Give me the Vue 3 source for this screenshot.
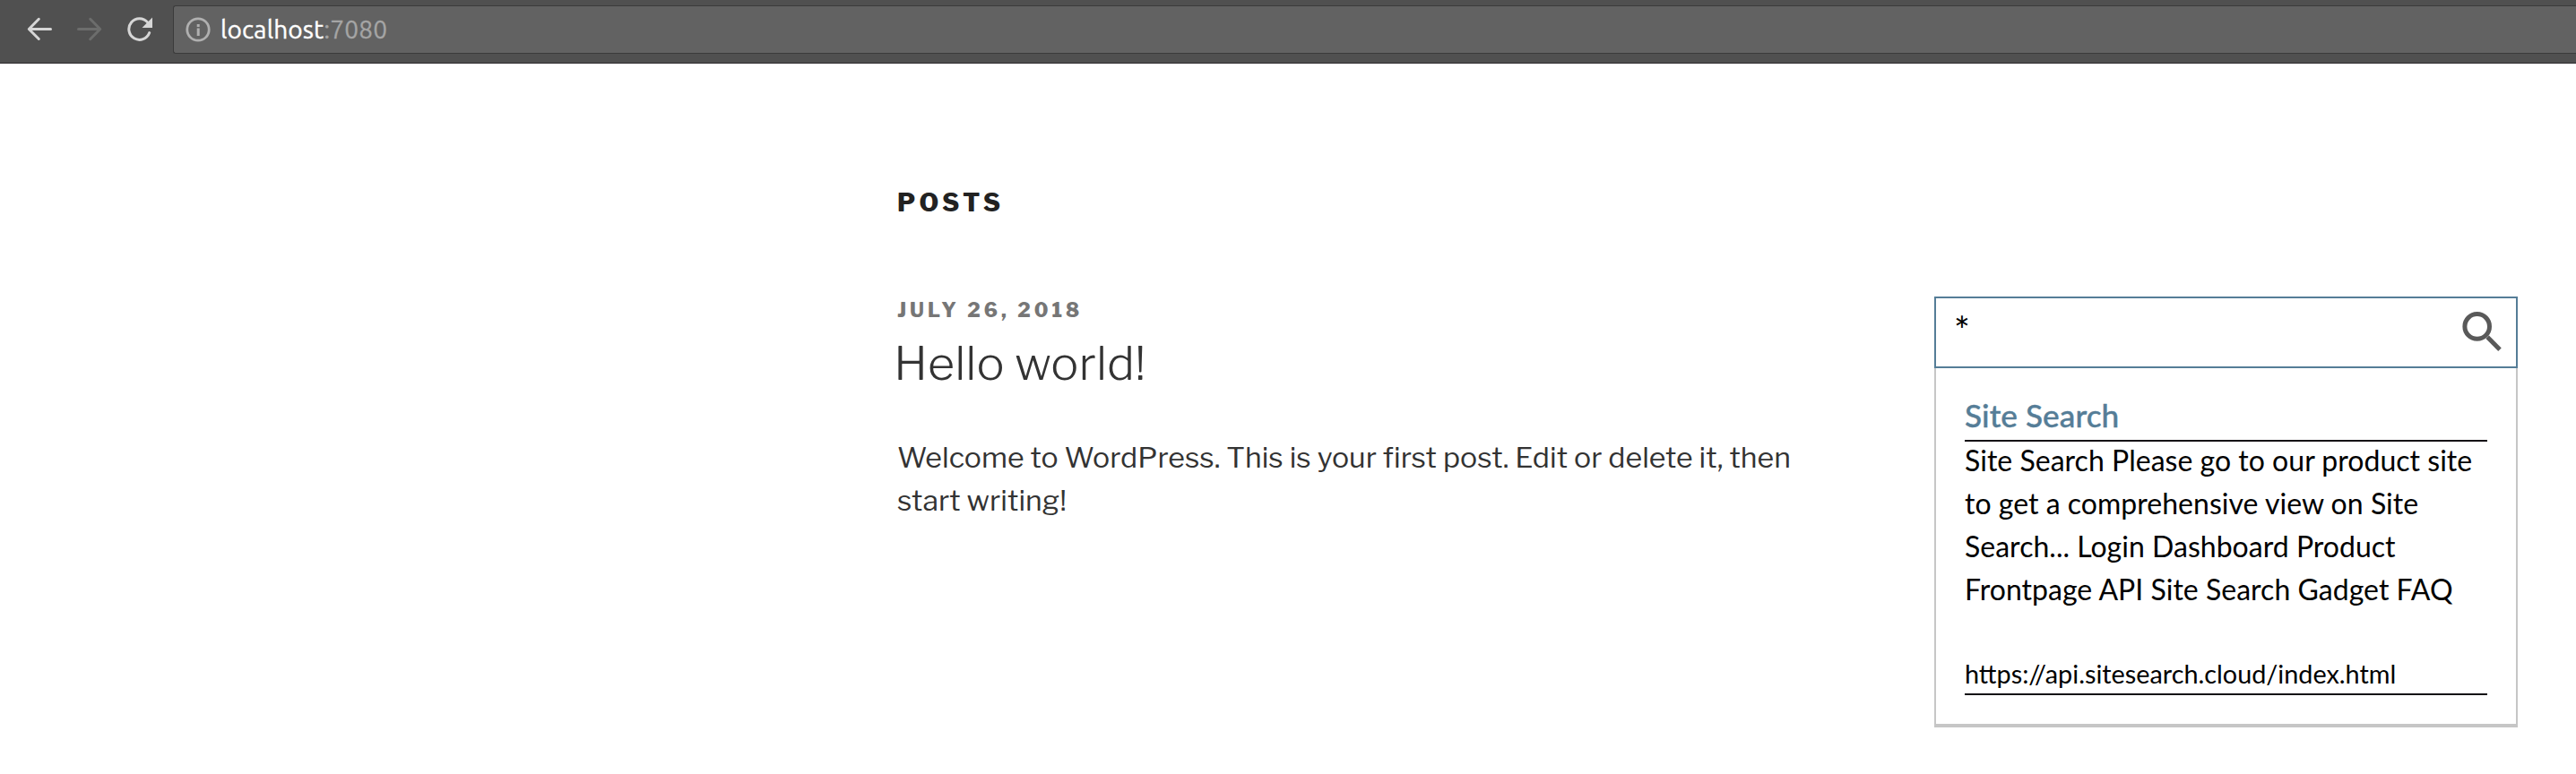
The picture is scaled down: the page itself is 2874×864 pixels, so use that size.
<script setup>
import { ref } from 'vue'

const query = ref('*')
const post = {
  date: 'July 26, 2018',
  title: 'Hello world!',
  body: 'Welcome to WordPress. This is your first post. Edit or delete it, then start writing!'
}
const results = [
  {
    title: 'Site Search',
    text: 'Site Search Please go to our product site to get a comprehensive view on Site Search... Login Dashboard Product Frontpage API Site Search Gadget FAQ',
    url: 'https://api.sitesearch.cloud/index.html'
  }
]
</script>

<template>
  <div class="window">
    <header class="toolbar">
      <nav class="nav">
        <svg class="icon back" viewBox="0 0 28 28">
          <path d="M26.5 14.5H2.8M13.3 3.3L2.3 14.5l11 11" />
        </svg>
        <svg class="icon forward" viewBox="0 0 28 28">
          <path d="M1.5 14.5h23.7M14.7 3.3l11 11.2-11 11.2" />
        </svg>
        <svg class="icon reload" viewBox="0 0 28 28">
          <path d="M24.7 18.6A11.8 11.8 0 1 1 22.6 6.9" />
          <path class="head" d="M28 1.5V13H16.5z" />
        </svg>
      </nav>
      <div class="address">
        <svg class="info" viewBox="0 0 28 28">
          <circle cx="14" cy="14" r="12.2" />
          <path d="M12.7 8h3v3h-3zM12.7 12.5h3V21h-3z" />
        </svg>
        <span class="host">localhost</span><span class="port">:7080</span>
      </div>
    </header>

    <div class="page">
      <main class="content">
        <h2 class="page-title">Posts</h2>
        <article>
          <div class="date">{{ post.date }}</div>
          <h3 class="post-title">{{ post.title }}</h3>
          <p class="post-body">{{ post.body }}</p>
        </article>
      </main>

      <aside class="search">
        <div class="search-box">
          <span class="query">{{ query }}</span>
          <svg class="glass" viewBox="0 0 44 44">
            <circle cx="16.7" cy="16.4" r="13.8" />
            <path d="M28.2 28.2L42 42.2" />
          </svg>
        </div>
        <div class="results">
          <section v-for="r in results" :key="r.url" class="result">
            <h4 class="result-title">{{ r.title }}</h4>
            <p class="result-text">{{ r.text }}</p>
            <div class="result-url">{{ r.url }}</div>
          </section>
        </div>
      </aside>
    </div>
  </div>
</template>

<style>
body {
  background: #fff;
}
</style>

<style scoped>
* {
  box-sizing: border-box;
}
.window {
  height: 864px;
  overflow: hidden;
  background: #fff;
}
.toolbar {
  display: flex;
  height: 71px;
  padding-top: 6px;
  background: #505050;
  border-bottom: 1px solid #2b292b;
}
.nav {
  display: flex;
  gap: 28px;
  padding: 12px 0 0 30px;
  width: 193px;
  flex: none;
}
.icon {
  width: 28px;
  height: 28px;
  fill: none;
  stroke: #d6d6d6;
  stroke-width: 3;
  stroke-linecap: round;
  stroke-linejoin: round;
}
.forward {
  stroke: #6c6d6c;
}
.reload .head {
  fill: #d6d6d6;
  stroke: none;
}
.address {
  display: flex;
  align-items: center;
  flex: 1;
  height: 54px;
  padding-left: 13px;
  background: #626262;
  border: 1px solid #3b3b3b;
  border-right: 0;
  border-radius: 3px 0 0 3px;
  font: 28px/52px Ubuntu, "Open Sans", sans-serif;
  letter-spacing: 0.15px;
}
.info {
  width: 28px;
  height: 28px;
  margin-right: 11px;
  fill: #b0b0b0;
}
.info circle {
  fill: none;
  stroke: #b0b0b0;
  stroke-width: 2.8;
}
.host {
  color: #fff;
  -webkit-text-stroke: 0.4px #fff;
}
.port {
  color: #a5a5a5;
  -webkit-text-stroke: 0.3px #a5a5a5;
}
.page {
  display: flex;
  padding-left: 1000px;
}
.content {
  width: 1020px;
  padding-top: 135px;
  font-family: "Libre Franklin", Inter, sans-serif;
}
.page-title {
  margin: 0;
  padding-left: 1px;
  font-size: 28px;
  font-weight: 800;
  line-height: 40px;
  letter-spacing: 4.3px;
  text-transform: uppercase;
  color: #222;
}
.date {
  margin-top: 84px;
  padding-left: 1px;
  font-size: 22px;
  font-weight: 800;
  line-height: 32px;
  letter-spacing: 0.1818em;
  text-transform: uppercase;
  color: #767676;
}
.post-title {
  margin: 14px 0 0 -3px;
  font-size: 52px;
  font-weight: 300;
  line-height: 60px;
  letter-spacing: 0.05px;
  color: #333;
}
.post-body {
  margin: 51px 0 0;
  padding-left: 1px;
  font-size: 32px;
  line-height: 48px;
  letter-spacing: 0.03px;
  color: #333;
}
.search {
  width: 651px;
  margin: 260px 0 0 138px;
  font-family: Lato, sans-serif;
}
.search-box {
  display: flex;
  justify-content: space-between;
  height: 80px;
  padding: 15px 16px 0 20px;
  border: 2px solid #557d97;
}
.query {
  font-size: 42px;
  line-height: 40px;
  color: #000;
}
.glass {
  width: 44px;
  height: 44px;
  fill: none;
  stroke: #595959;
  stroke-width: 5;
}
.results {
  height: 401px;
  padding: 30px 32px 0;
  border: 2px solid #c6c6c6;
  border-top: 0;
  border-bottom-width: 4px;
}
.result-title {
  margin: 0;
  height: 52px;
  border-bottom: 2px solid #141115;
  font-size: 35.2px;
  font-weight: 500;
  line-height: 44px;
  letter-spacing: 0.05px;
  color: #557d97;
  -webkit-text-stroke: 0.4px #557d97;
}
.result-text {
  margin: -3px 0 0;
  font-size: 32px;
  line-height: 48px;
  letter-spacing: 0.02px;
  color: #000;
}
.result-url {
  margin-top: 48px;
  height: 46px;
  border-bottom: 2px solid #141115;
  font-size: 28.8px;
  line-height: 44px;
  color: #000;
}
</style>
